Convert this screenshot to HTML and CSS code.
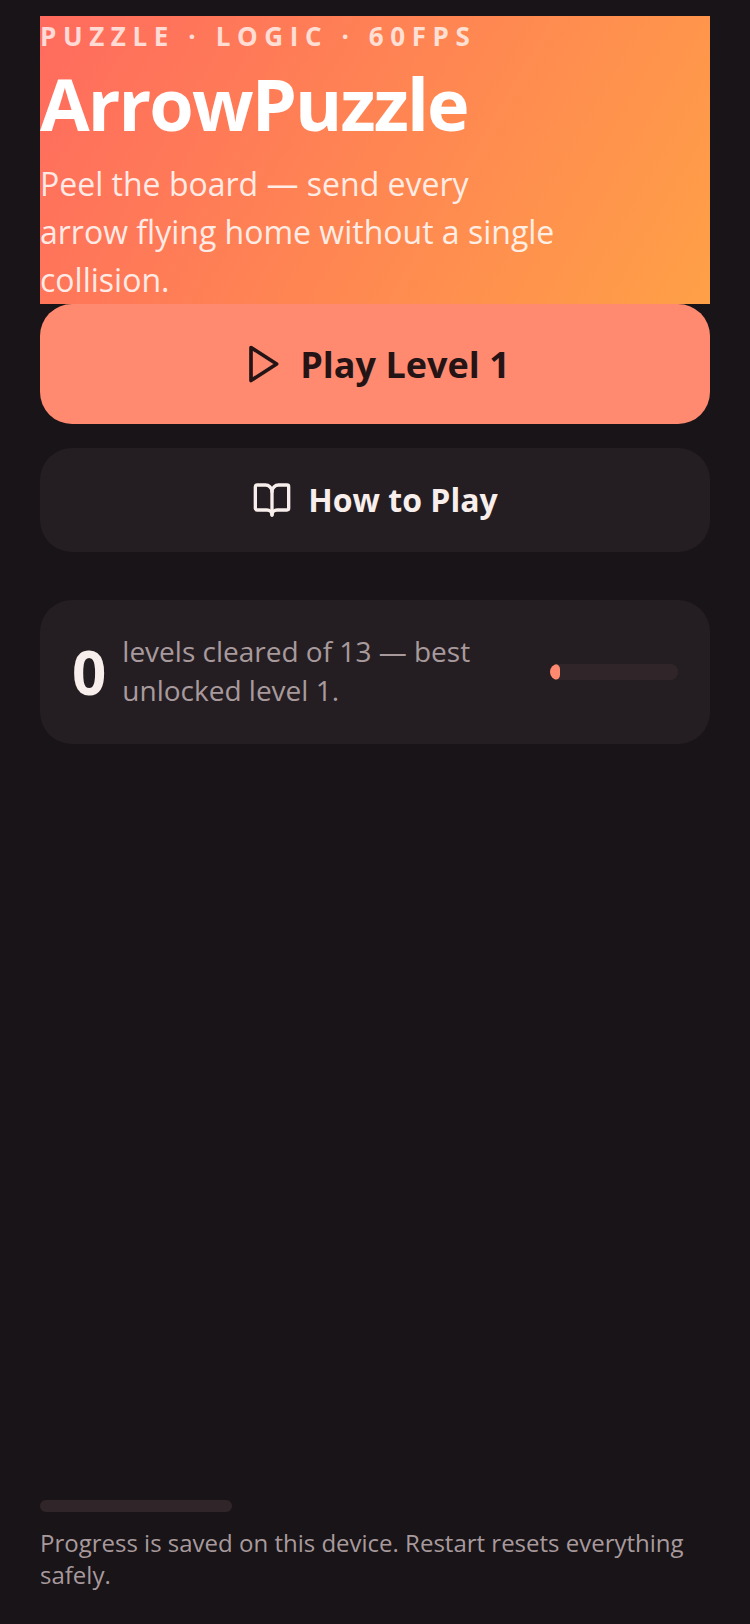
FILE: index.html
```html
<!DOCTYPE html>
<html lang="en">
<head>
    <meta charset="UTF-8">
    <meta name="viewport" content="width=device-width, initial-scale=1.0">
    <title>ArrowPuzzle</title>
    <link rel="stylesheet" href="styles.css">
</head>
<body>
    <div class="screen">
        <header class="hero">
            <div class="eyebrow">PUZZLE · LOGIC · 60FPS</div>
            <h1>ArrowPuzzle</h1>
            <p>Peel the board — send every arrow flying home without a single collision.</p>
        </header>

        <button class="btn btn-play">
            <svg width="44" height="44" viewBox="0 0 24 24" fill="none" stroke="currentColor" stroke-width="2" stroke-linecap="round" stroke-linejoin="round"><polygon points="6 3 20 12 6 21 6 3"/></svg>
            Play Level 1
        </button>

        <button class="btn btn-help">
            <svg width="40" height="40" viewBox="0 0 24 24" fill="none" stroke="currentColor" stroke-width="2" stroke-linecap="round" stroke-linejoin="round"><path d="M12 7v14"/><path d="M3 18a1 1 0 0 1-1-1V4a1 1 0 0 1 1-1h5a4 4 0 0 1 4 4 4 4 0 0 1 4-4h5a1 1 0 0 1 1 1v13a1 1 0 0 1-1 1h-6a3 3 0 0 0-3 3 3 3 0 0 0-3-3z"/></svg>
            <span class="btn-label">How to Play</span>
        </button>

        <section class="stats">
            <span class="count">0</span>
            <span class="stats-text">levels cleared of 13 — best unlocked level 1.</span>
            <div class="track"><div class="fill"></div></div>
        </section>

        <footer class="foot">
            <div class="foot-bar"></div>
            <p>Progress is saved on this device. Restart resets everything safely.</p>
        </footer>
    </div>
</body>
</html>
```

FILE: styles.css
```css
body {
    font-family: "Open Sans", sans-serif;
    background-color: #181418;
    margin: 0;
    padding: 0;
}

.screen {
    height: 1624px;
    box-sizing: border-box;
    padding: 16px 40px 0;
    display: flex;
    flex-direction: column;
    overflow: hidden;
}

.hero {
    height: 288px;
    flex: none;
    background: linear-gradient(120deg, #ff6b5e 0%, #ffa047 100%);
    color: #fff;
}

.eyebrow {
    font-size: 26px;
    line-height: 40px;
    font-weight: 700;
    letter-spacing: 6.6px;
    opacity: 0.75;
}

h1 {
    margin: 0 0 10px;
    font-size: 72px;
    line-height: 94px;
    font-weight: 700;
    letter-spacing: -1.9px;
}

.hero p {
    margin: 0;
    max-width: 516px;
    font-size: 32px;
    line-height: 48px;
    opacity: 0.85;
}

.btn {
    display: flex;
    align-items: center;
    justify-content: center;
    width: 100%;
    border: none;
    border-radius: 32px;
    font-family: inherit;
    font-weight: 700;
    flex: none;
}

.btn-play {
    height: 120px;
    gap: 16px;
    background-color: #ff8a70;
    color: #241416;
    font-size: 36px;
}

.btn-help {
    height: 104px;
    gap: 16px;
    margin-top: 24px;
    background-color: #241e23;
    color: #f8efec;
    font-size: 32px;
}

.btn-label {
    padding-bottom: 2px;
}

.stats {
    margin-top: 48px;
    height: 144px;
    flex: none;
    box-sizing: border-box;
    padding: 0 32px;
    display: flex;
    align-items: center;
    gap: 16px;
    border-radius: 32px;
    background-color: #241e23;
}

.count {
    font-size: 60px;
    font-weight: 700;
    color: #f8efec;
}

.stats-text {
    width: 400px;
    padding-bottom: 2px;
    font-size: 28px;
    line-height: 39px;
    color: #a89a9c;
}

.track {
    width: 128px;
    height: 16px;
    margin-left: auto;
    border-radius: 8px;
    background-color: #302629;
    overflow: hidden;
}

.fill {
    width: 10px;
    height: 100%;
    border-radius: 8px;
    background-color: #ff8a70;
}

.foot {
    margin-top: auto;
    padding-bottom: 33px;
}

.foot-bar {
    width: 192px;
    height: 12px;
    border-radius: 6px;
    background-color: #302629;
}

.foot p {
    margin: 15px 0 0;
    font-size: 24px;
    line-height: 32px;
    color: #a89a9c;
}
```
